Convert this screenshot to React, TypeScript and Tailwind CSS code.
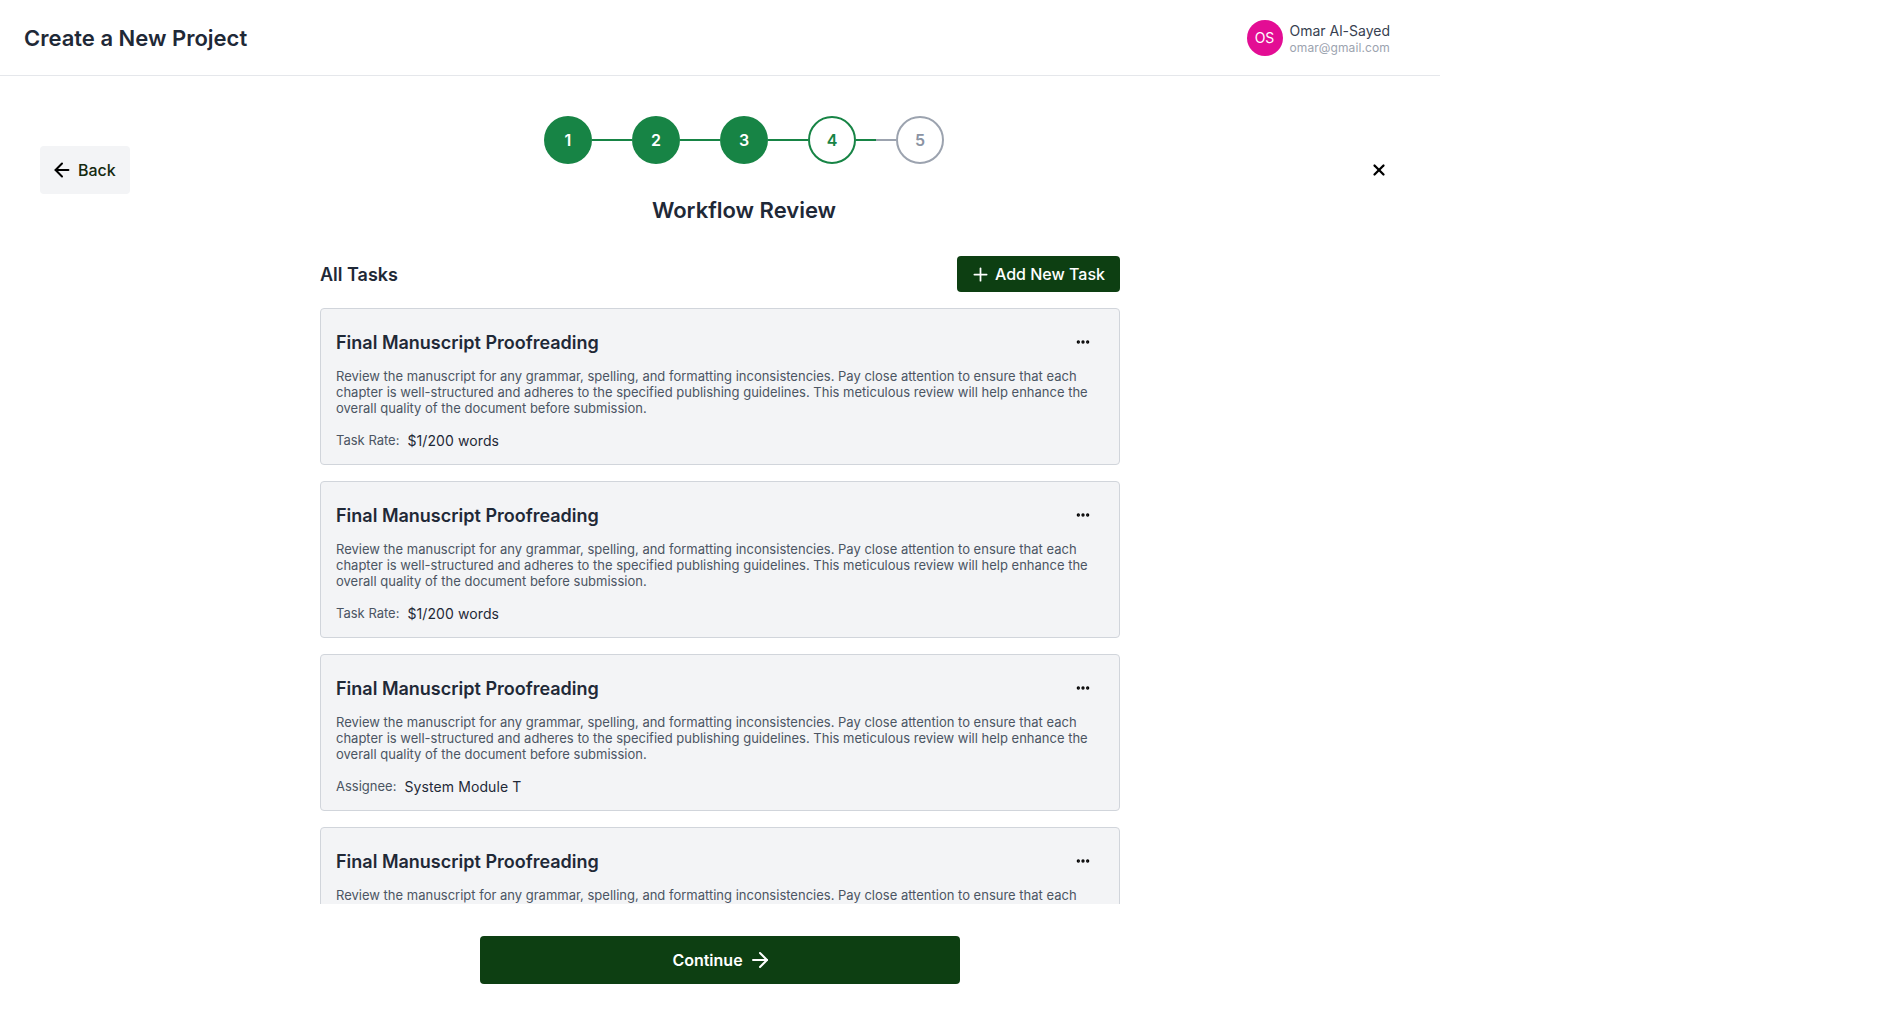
import { ArrowLeft, ArrowRight, Ellipsis, Plus, X } from "lucide-react";

const font = { fontFamily: "Inter, sans-serif" };

const desc =
  "Review the manuscript for any grammar, spelling, and formatting inconsistencies. Pay close attention to ensure that each chapter is well-structured and adheres to the specified publishing guidelines. This meticulous review will help enhance the overall quality of the document before submission.";

function Step({ n, state }: { n: number; state: "done" | "active" | "todo" }) {
  const cls =
    state === "done"
      ? "bg-[#178445] text-white"
      : state === "active"
        ? "border-2 border-[#178445] text-[#178445] bg-white"
        : "border-2 border-[#9ca3af] text-[#8b93a3] bg-white";
  return (
    <div className={`w-12 h-12 rounded-full flex items-center justify-center text-base font-semibold ${cls}`}>{n}</div>
  );
}

function Line({ half }: { half?: boolean }) {
  return (
    <div className="w-10 h-0.5 bg-[#178445] flex justify-end">
      {half && <div className="w-5 h-0.5 bg-[#9ca3af]" />}
    </div>
  );
}

function Card({ label, value }: { label: string; value: string }) {
  return (
    <div className="shrink-0 rounded border border-[#d1d5db] bg-[#f3f4f6] px-[15px] pt-4 pb-[13px]">
      <div className="flex items-center justify-between h-9">
        <h3 className="text-lg font-semibold leading-7 text-[#1f2937]">Final Manuscript Proofreading</h3>
        <Ellipsis className="w-4 h-4 mr-[13px] -mt-0.5 text-black" strokeWidth={3} />
      </div>
      <p className="mt-[7px] text-[13px] leading-4 text-[#4b5563]">{desc}</p>
      <div className="mt-[15px] flex items-center gap-2 h-5">
        <span className="text-[13px] text-[#4b5563]">{label}</span>
        <span className="text-sm tracking-[0.1px] text-[#1f2937]">{value}</span>
      </div>
    </div>
  );
}

export default function App() {
  return (
    <div className="w-[1440px] bg-white" style={font}>
      <header className="h-[76px] flex items-center justify-between border-b border-[#e5e7eb] pl-6 pr-[50px]">
        <h1 className="text-[22px] leading-8 pt-px font-semibold text-[#1f2937]">Create a New Project</h1>
        <div className="flex items-center gap-[7px]">
          <div className="w-9 h-9 rounded-full bg-[#e30d94] text-white text-sm flex items-center justify-center">OS</div>
          <div className="flex flex-col pt-0.5">
            <span className="text-sm leading-[17px] text-[#374151]">Omar Al-Sayed</span>
            <span className="text-xs leading-[17px] tracking-[0.1px] text-[#9ca3af]">omar@gmail.com</span>
          </div>
        </div>
      </header>
      <div className="flex items-center px-10 pt-10">
        <button className="w-[90px] h-12 rounded bg-[#f3f4f6] flex items-center pl-[11px] gap-[5px] text-base font-medium text-[#14290f]">
          <ArrowLeft className="w-[22px] h-[22px] text-black" strokeWidth={2.2} />
          Back
        </button>
        <div className="flex-1 flex flex-col items-center">
          <div className="flex items-center">
            <Step n={1} state="done" />
            <Line />
            <Step n={2} state="done" />
            <Line />
            <Step n={3} state="done" />
            <Line />
            <Step n={4} state="active" />
            <Line half />
            <Step n={5} state="todo" />
          </div>
          <h2 className="mt-8 text-[22px] leading-7 font-semibold text-[#1f2937]">Workflow Review</h2>
        </div>
        <button className="w-[42px] h-6 flex items-center justify-center text-black">
          <X className="w-[18px] h-[18px]" strokeWidth={3} />
        </button>
      </div>
      <div className="w-[800px] ml-[320px] mt-8">
        <div className="flex items-center justify-between">
          <h3 className="text-lg pt-px font-semibold text-[#1f2937]">All Tasks</h3>
          <button className="h-9 w-[163px] pl-[13px] rounded bg-[#0d3f12] text-white text-base font-medium flex items-center gap-1">
            <Plus className="w-[21px] h-[21px]" />
            Add New Task
          </button>
        </div>
        <div className="mt-4 h-[596px] overflow-hidden flex flex-col gap-4">
          <Card label="Task Rate:" value="$1/200 words" />
          <Card label="Task Rate:" value="$1/200 words" />
          <Card label="Assignee:" value="System Module T" />
          <Card label="Task Rate:" value="$1/200 words" />
        </div>
        <button className="mt-8 ml-40 pl-1 w-[480px] h-12 rounded bg-[#0d3f12] text-white text-base font-semibold flex items-center justify-center gap-[5px]">
          Continue
          <ArrowRight className="w-6 h-6" />
        </button>
      </div>
    </div>
  );
}
